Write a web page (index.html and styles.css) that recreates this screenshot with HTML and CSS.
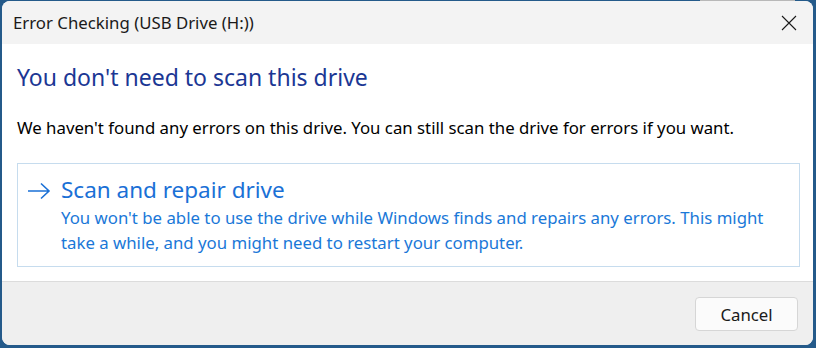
FILE: index.html
```html
<!DOCTYPE html>
<html>
<head>
<meta charset="utf-8">
<link rel="stylesheet" href="styles.css">
</head>
<body>
<div class="topstrip"></div>
<div class="window">
  <div class="titlebar">
    <span class="title">Error Checking (USB Drive (H:))</span>
    <svg class="close" width="16" height="16" viewBox="0 0 16 16"><path d="M1 1 L15 15 M15 1 L1 15" stroke="#1a1a1a" stroke-width="1.1" fill="none"/></svg>
  </div>
  <div class="content">
    <h1 class="heading">You don't need to scan this drive</h1>
    <p class="body">We haven't found any errors on this drive. You can still scan the drive for errors if you want.</p>
    <div class="cmdlink">
      <svg class="arrow" width="24" height="18" viewBox="0 0 24 18"><path d="M1 9 H22 M14 1.5 L22 9 L14 16.5" stroke="#1a70d6" stroke-width="1.6" fill="none"/></svg>
      <div class="cmdtext">
        <div class="cmdtitle">Scan and repair drive</div>
        <div class="cmddesc">You won't be able to use the drive while Windows finds and repairs any errors. This might take a while, and you might need to restart your computer.</div>
      </div>
    </div>
  </div>
  <div class="footer">
    <button class="btn">Cancel</button>
  </div>
</div>
</body>
</html>
```
FILE: styles.css
```css
html, body {
  margin: 0;
  padding: 0;
}
body {
  width: 816px;
  height: 348px;
  background: #245a8a;
  font-family: "Noto Sans", "Open Sans", sans-serif;
  overflow: hidden;
  position: relative;
}
.topstrip {
  position: absolute;
  left: 700px;
  top: 0;
  width: 95px;
  height: 4px;
  background: #b8b8b8;
}
.window {
  position: relative;
  margin: 1px 3px 0 2px;
  width: 811px;
  height: 344px;
  border-radius: 8px;
  overflow: hidden;
  background: #ffffff;
  display: flex;
  flex-direction: column;
}
.titlebar {
  height: 43px;
  background: #f3f3f3;
  display: flex;
  align-items: center;
  justify-content: space-between;
  padding: 0 16px 0 11px;
  flex: none;
}
.title {
  font-size: 16.8px;
  color: #1a1a1a;
}
.close {
  margin-top: 1px;
}
.content {
  flex: 1;
  padding: 18px 13px 0 15px;
}
.heading {
  margin: 0;
  font-weight: normal;
  font-size: 23px;
  line-height: 30px;
  color: #1b3794;
}
.body {
  margin: 25px 0 0 0;
  font-size: 16.8px;
  line-height: 22px;
  color: #000;
}
.cmdlink {
  margin-top: 24px;
  border: 1px solid #c6dcee;
  height: 104px;
  box-sizing: border-box;
  display: flex;
  align-items: flex-start;
  padding: 11px 10px 0 9px;
}
.arrow {
  flex: none;
  margin-top: 7px;
  margin-right: 10px;
}
.cmdtitle {
  font-size: 22.5px;
  line-height: 30px;
  color: #1a70d6;
}
.cmddesc {
  font-size: 16.8px;
  line-height: 25px;
  color: #1a78d8;
}
.footer {
  flex: none;
  height: 64px;
  background: #efefef;
  border-top: 1px solid #dcdcdc;
  display: flex;
  justify-content: flex-end;
  align-items: flex-start;
  padding: 15px 15px 0 0;
  box-sizing: border-box;
}
.btn {
  width: 103px;
  height: 34px;
  background: #fbfbfb;
  border: 1px solid #d6d6d6;
  border-radius: 4px;
  font-family: inherit;
  font-size: 16.8px;
  color: #1a1a1a;
  padding: 0;
}
```
